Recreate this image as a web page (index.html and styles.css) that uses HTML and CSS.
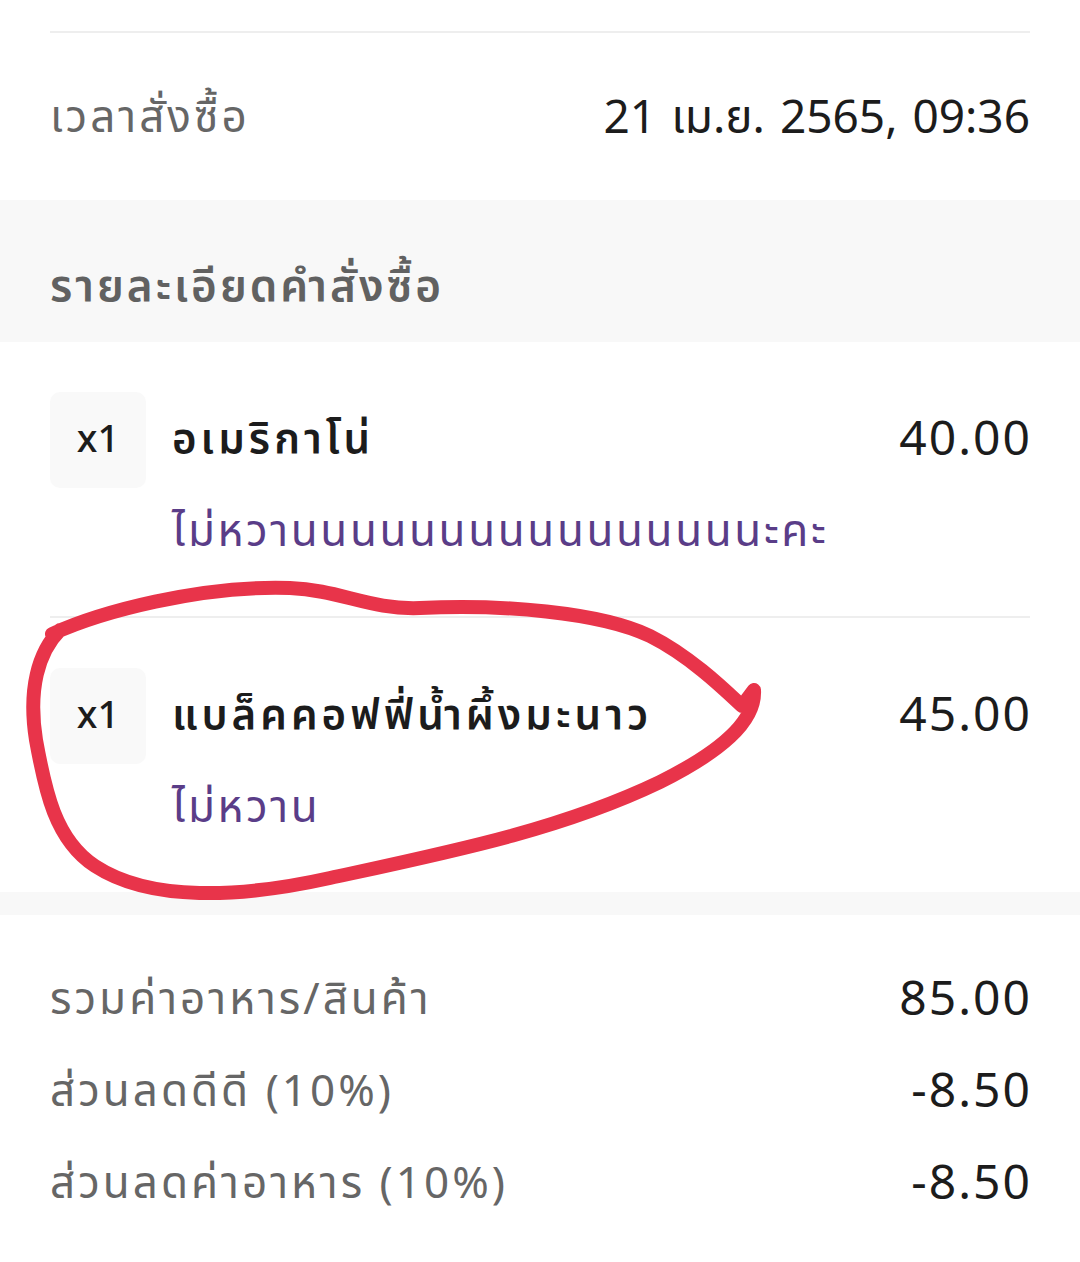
FILE: index.html
```html
<!DOCTYPE html>
<html>

<head>
  <meta charset="UTF-8">
  <title>รายละเอียดคำสั่งซื้อ</title>
  <link rel="stylesheet" href="styles.css">
</head>

<body>
  <div class="receipt">
    <div class="block">
      <div class="row time">
        <span class="label">เวลาสั่งซื้อ</span>
        <span class="value date">21 เม.ย. 2565, 09:36</span>
      </div>
    </div>

    <div class="section-head">รายละเอียดคำสั่งซื้อ</div>

    <div class="items">
      <div class="item">
        <div class="qty">x1</div>
        <div class="name">อเมริกาโน่</div>
        <div class="price">40.00</div>
        <div class="note">ไม่หวานนนนนนนนนนนนนนนนะคะ</div>
      </div>
      <div class="item">
        <div class="qty">x1</div>
        <div class="name">แบล็คคอฟฟี่น้ำผึ้งมะนาว</div>
        <div class="price">45.00</div>
        <div class="note">ไม่หวาน</div>
      </div>
    </div>

    <div class="spacer"></div>

    <div class="summary">
      <div class="row">
        <span class="label">รวมค่าอาหาร/สินค้า</span>
        <span class="value">85.00</span>
      </div>
      <div class="row">
        <span class="label">ส่วนลดดีดี (10%)</span>
        <span class="value">-8.50</span>
      </div>
      <div class="row">
        <span class="label">ส่วนลดค่าอาหาร (10%)</span>
        <span class="value">-8.50</span>
      </div>
    </div>

    <svg class="scribble" width="1080" height="1262" viewBox="0 0 1080 1262">
      <path d="M52 634 C100 612 200 585 290 588 C340 590 370 610 420 608 C500 604 600 612 650 636 C690 656 725 690 742 706 L754 690 C756 722 720 752 660 782 C560 830 450 852 330 878 C240 898 150 902 95 866 C55 840 45 790 36 740 C28 690 38 652 60 630" />
    </svg>
  </div>
</body>

</html>
```

FILE: styles.css
```css
* {
  margin: 0px;
  padding: 0px;
  box-sizing: border-box;
}

body {
  font-family: "Noto Sans Thai", "Noto Sans", sans-serif;
  background-color: white;
  color: #1c1c1c;
}

.receipt {
  position: relative;
  width: 1080px;
  height: 1262px;
  overflow: hidden;
}

.block {
  padding: 0 50px;
}

.row {
  display: flex;
  justify-content: space-between;
  align-items: center;
  font-size: 44px;
}

.row .label {
  color: #666666;
  letter-spacing: 3px;
}

.row .value {
  font-size: 48px;
  letter-spacing: 2px;
  margin-right: -2px;
}

.time {
  margin-top: 31px;
  border-top: 2px solid #eeeeee;
  height: 169px;
  padding-top: 4px;
}

.row .date {
  font-size: 46px;
  letter-spacing: 0px;
  word-spacing: 3px;
  margin-right: 0px;
}

.section-head {
  background-color: #f8f8f8;
  height: 142px;
  padding: 54px 50px 0;
  font-size: 44px;
  font-weight: 600;
  letter-spacing: 3px;
  color: #616161;
}

.items {
  padding: 0 50px;
}

.item {
  display: grid;
  grid-template-columns: 96px 1fr auto;
  column-gap: 26px;
  padding: 50px 0 53px;
  border-bottom: 2px solid #eeeeee;
}

.item:last-child {
  border-bottom: none;
}

.qty {
  width: 96px;
  height: 96px;
  background-color: #f9f9f9;
  border-radius: 10px;
  display: grid;
  place-items: center;
  font-size: 38px;
  font-weight: 500;
}

.name {
  align-self: center;
  font-size: 42px;
  font-weight: 600;
  letter-spacing: 4px;
}

.price {
  align-self: center;
  font-size: 48px;
  letter-spacing: 2px;
  margin-right: -2px;
}

.note {
  grid-column: 2 / 4;
  margin-top: 15px;
  line-height: 60px;
  font-size: 44px;
  letter-spacing: 2.6px;
  color: #5a3d88;
}

.spacer {
  height: 23px;
  background-color: #f8f8f8;
}

.summary {
  padding: 39px 50px 0;
}

.summary .row {
  height: 92px;
}

.scribble {
  position: absolute;
  top: 0;
  left: 0;
  pointer-events: none;
}

.scribble path {
  fill: none;
  stroke: #e8344a;
  stroke-width: 14;
  stroke-linecap: round;
  stroke-linejoin: round;
}
```
